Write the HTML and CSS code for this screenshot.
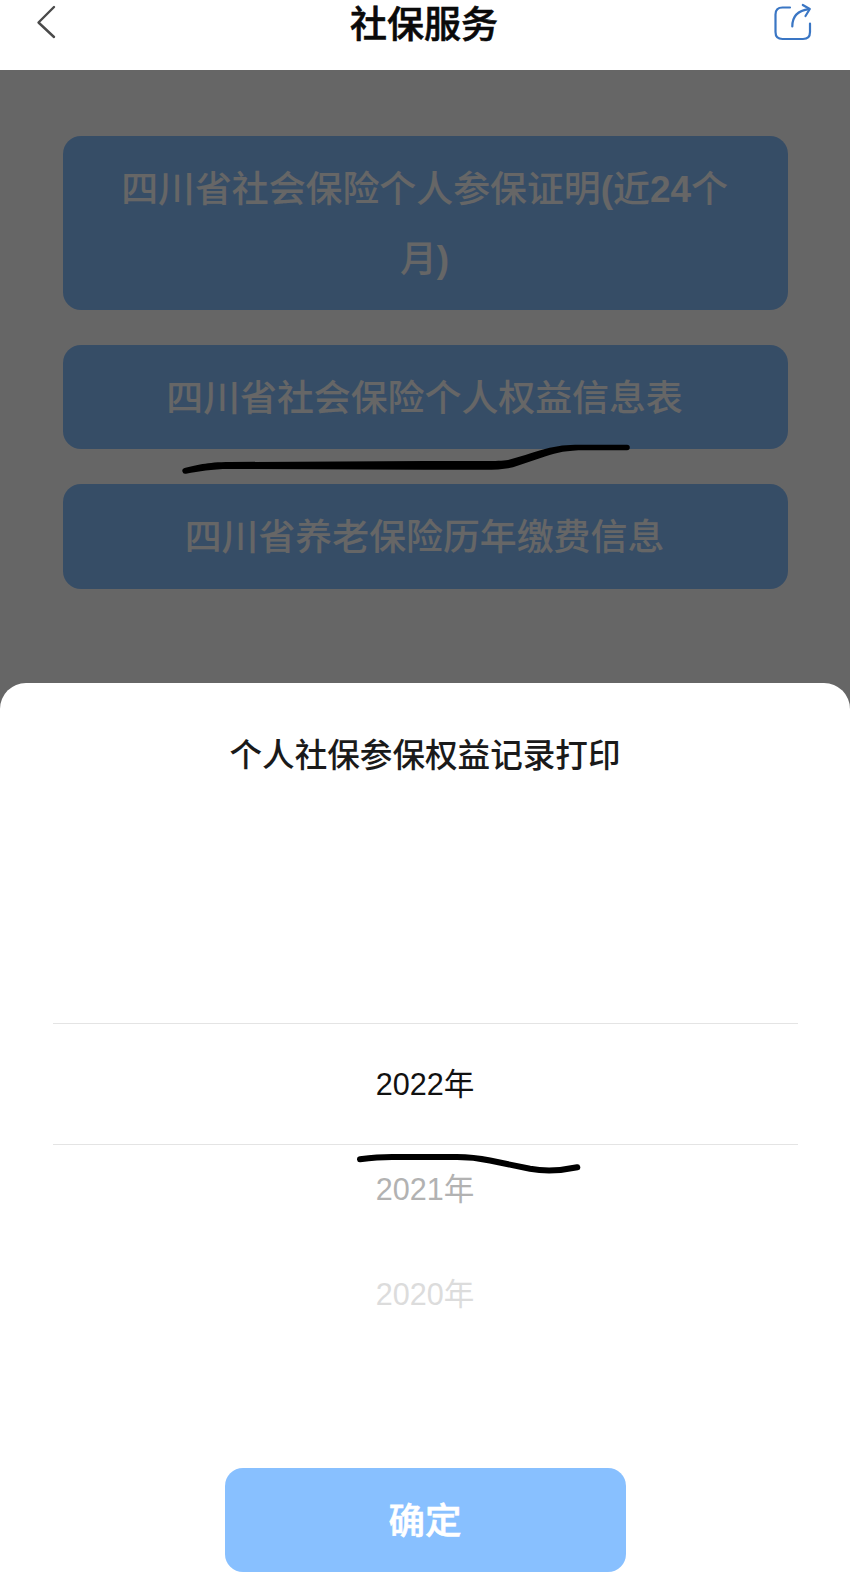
FILE: index.html
```html
<!DOCTYPE html>
<html lang="zh-CN">
<head>
    <meta charset="UTF-8">
    <title>社保服务</title>
    <link rel="stylesheet" href="styles.css">
</head>
<body>
    <div class="header">
        <svg class="back" width="20" height="34" viewBox="0 0 20 34">
            <path d="M18 2 L2.5 17.5 L18 32"/>
        </svg>
        <div class="title">社保服务</div>
        <svg class="share" width="40" height="40" viewBox="0 0 40 40">
            <path d="M16 5.5 H8.5 Q1.5 5.5 1.5 12.500 V30 Q1.500 37 8.500 37 H29 Q36 37 36 30 V21.500"/>
            <path d="M18.300 24.500 C18.300 14.500 24 8.500 35 7.200"/>
            <path d="M28.800 3 L35.800 7 L31.500 14"/>
        </svg>
    </div>

    <div class="content">
        <div class="service">四川省社会保险个人参保证明<b>(</b>近<b>24</b>个月<b>)</b></div>
        <div class="service">四川省社会保险个人权益信息表</div>
        <div class="service">四川省养老保险历年缴费信息</div>
        <div class="mask"></div>
    </div>

    <div class="sheet">
        <div class="sheet-title">个人社保参保权益记录打印</div>
        <div class="picker">
            <div class="year selected">2022年</div>
            <div class="year near">2021年</div>
            <div class="year far">2020年</div>
        </div>
        <button class="confirm">确定</button>
    </div>

    <!-- hand-drawn marks under the options to choose -->
    <svg class="marks" width="850" height="1592" viewBox="0 0 850 1592">
        <path class="mark-fill" d="M184.500 468 C196 465.500 206 462 230 462 L425 461 H485 C495 461 503 460.800 508 460 C520 457 530 453 545 449 C558 445.500 566 444.800 580 444.700 H627 A2.800 2.800 0 0 1 627 450.300 H585 C566 450.300 558 452.500 545 456.500 L513 467.300 C505 469 495 469.700 485 469.700 H425 L230 469 C210 469 200 471.500 186 473.700 A2.900 2.900 0 0 1 184.500 468 Z"/>
        <path class="mark-line" d="M360 1159.300 C370 1158 378 1157 392 1157 H457 C470 1157 478 1158 490 1160.500 L530 1168.800 C547 1171.800 560 1171 577.300 1167.300"/>
    </svg>
</body>
</html>
```

FILE: styles.css
```css
body {
    position: relative;
    width: 850px;
    height: 1592px;
    margin: 0;
    overflow: hidden;
    background-color: #fff;
    font-family: "Liberation Sans", "Noto Sans CJK SC", sans-serif;
}
.header {
    display: flex;
    justify-content: space-between;
    align-items: flex-start;
    height: 70px;
    padding: 0 36px;
    box-sizing: border-box;
}
.header svg {
    fill: none;
    stroke-linecap: round;
    stroke-linejoin: round;
}
.back {
    margin-top: 5px;
    margin-right: 18px;
    stroke: #4a4a4a;
    stroke-width: 2.4;
}
.share {
    margin-top: 2px;
    margin-right: 0;
    stroke: #3a76c4;
    stroke-width: 2.2;
}
.title {
    padding-top: 3px;
    color: #0a0a0a;
    font-size: 37px;
    font-weight: 500;
    line-height: 46px;
    -webkit-text-stroke: 0.6px #0a0a0a;
}
.content {
    position: relative;
    display: flex;
    flex-direction: column;
    gap: 35px;
    height: 650px;
    padding: 66px 62px 0 63px;
    box-sizing: border-box;
}
.service {
    padding: 19px 51px 15.2px 49px;
    border-radius: 18px;
    background-color: #88c0ff;
    color: #fff;
    font-size: 36.9px;
    font-weight: 500;
    line-height: 70px;
    text-align: center;
}
/* dims everything behind the sheet */
.mask {
    position: absolute;
    inset: 0;
    background-color: rgba(0, 0, 0, 0.6);
}
.sheet {
    position: relative;
    display: flex;
    flex-direction: column;
    align-items: center;
    height: 909px;
    margin-top: -37px;
    border-radius: 26px 26px 0 0;
    background-color: #fff;
}
.sheet-title {
    margin-top: 48px;
    color: #1a1a1a;
    font-size: 32.6px;
    font-weight: 500;
    line-height: 50px;
}
.picker {
    width: 745px;
    height: 644px;
    padding-top: 242px;
    box-sizing: border-box;
    font-size: 30.6px;
    text-align: center;
}
.year {
    height: 105px;
    line-height: 106px;
}
.selected {
    height: 120px;
    margin-bottom: -9px;
    border-top: 1px solid #e4e4e4;
    border-bottom: 1px solid #e4e4e4;
    color: #111;
    line-height: 120px;
}
.near {
    color: #b2b2b2;
}
.far {
    color: #dcdcdc;
}
.confirm {
    width: 401px;
    height: 104px;
    margin-top: 43px;
    padding: 0 0 3px;
    border: none;
    border-radius: 18px;
    background-color: #88c0ff;
    color: #fff;
    font-family: inherit;
    font-size: 36.5px;
    font-weight: 500;
    -webkit-text-stroke: 0.6px #fff;
}
.marks {
    position: absolute;
    top: 0;
    left: 0;
    pointer-events: none;
}
.mark-fill {
    fill: #000;
}
.mark-line {
    fill: none;
    stroke: #000;
    stroke-width: 6;
    stroke-linecap: round;
}
```
